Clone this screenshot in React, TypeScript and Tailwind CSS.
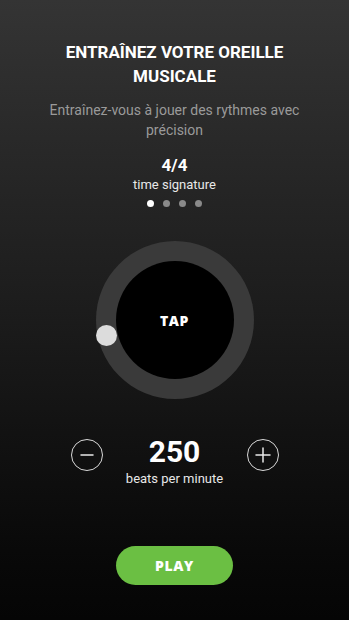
export default function App() {
  const dots = [true, false, false, false];

  return (
    <div
      className="w-[349px] h-[620px] flex flex-col items-center text-white bg-gradient-to-b from-[#343434] via-[#1c1c1c] to-[#050505] pt-[40px]"
      style={{ fontFamily: "Roboto, 'Liberation Sans', sans-serif" }}
    >
      {/* Heading */}
      <h1 className="w-[260px] text-center text-[17px] leading-[24px] font-bold">
        ENTRAÎNEZ VOTRE OREILLE MUSICALE
      </h1>
      <p className="mt-3 w-[260px] text-center text-[14px] leading-[20px] text-[#9a9a9a]">
        Entraînez-vous à jouer des rythmes avec précision
      </p>

      {/* Time signature */}
      <div className="mt-[15px] text-[17px] leading-[20px] font-bold">4/4</div>
      <div className="mt-[1px] text-[13px] leading-[18px] text-[#e8e8e8]">time signature</div>
      <div className="mt-[6px] flex gap-[9px]">
        {dots.map((active, i) => (
          <span
            key={i}
            className={`w-[7px] h-[7px] rounded-full ${active ? "bg-white" : "bg-[#8a8a8a]"}`}
          />
        ))}
      </div>

      {/* Tap ring */}
      <div className="relative mt-[34px] w-[158px] h-[158px] rounded-full bg-[#3a3a3a] flex items-center justify-center">
        <button className="w-[118px] h-[118px] rounded-full bg-black flex items-center justify-center">
          <span
            className="text-[14px] font-extrabold tracking-[0.6px]"
            style={{ fontFamily: "'Open Sans', Roboto, sans-serif" }}
          >
            TAP
          </span>
        </button>
        <span className="absolute left-[0px] top-[84px] w-[21px] h-[21px] rounded-full bg-[#dcdcdc]" />
      </div>

      {/* Tempo controls */}
      <div className="mt-[36px] flex items-center justify-center gap-[7px]">
        <button className="w-[32px] h-[32px] rounded-full border border-[#d8d8d8] flex items-center justify-center mt-[-14px]">
          <svg width="16" height="16" viewBox="0 0 16 16">
            <path d="M2 8h12" stroke="#e8e8e8" strokeWidth="1.5" strokeLinecap="round" />
          </svg>
        </button>
        <div className="w-[130px] flex flex-col items-center">
          <div className="text-[30px] leading-[34px] font-bold">250</div>
          <div className="mt-[1px] text-[13px] leading-[18px] text-[#e8e8e8]">beats per minute</div>
        </div>
        <button className="w-[32px] h-[32px] rounded-full border border-[#d8d8d8] flex items-center justify-center mt-[-14px]">
          <svg width="18" height="18" viewBox="0 0 18 18">
            <path d="M2 9h14M9 2v14" stroke="#e8e8e8" strokeWidth="1.5" strokeLinecap="round" />
          </svg>
        </button>
      </div>

      {/* Play */}
      <button className="mt-[58px] w-[117px] h-[39px] rounded-full bg-[#6bbf43] flex items-center justify-center">
        <span
          className="text-[14px] font-extrabold tracking-[0.6px]"
          style={{ fontFamily: "'Open Sans', Roboto, sans-serif" }}
        >
          PLAY
        </span>
      </button>
    </div>
  );
}
